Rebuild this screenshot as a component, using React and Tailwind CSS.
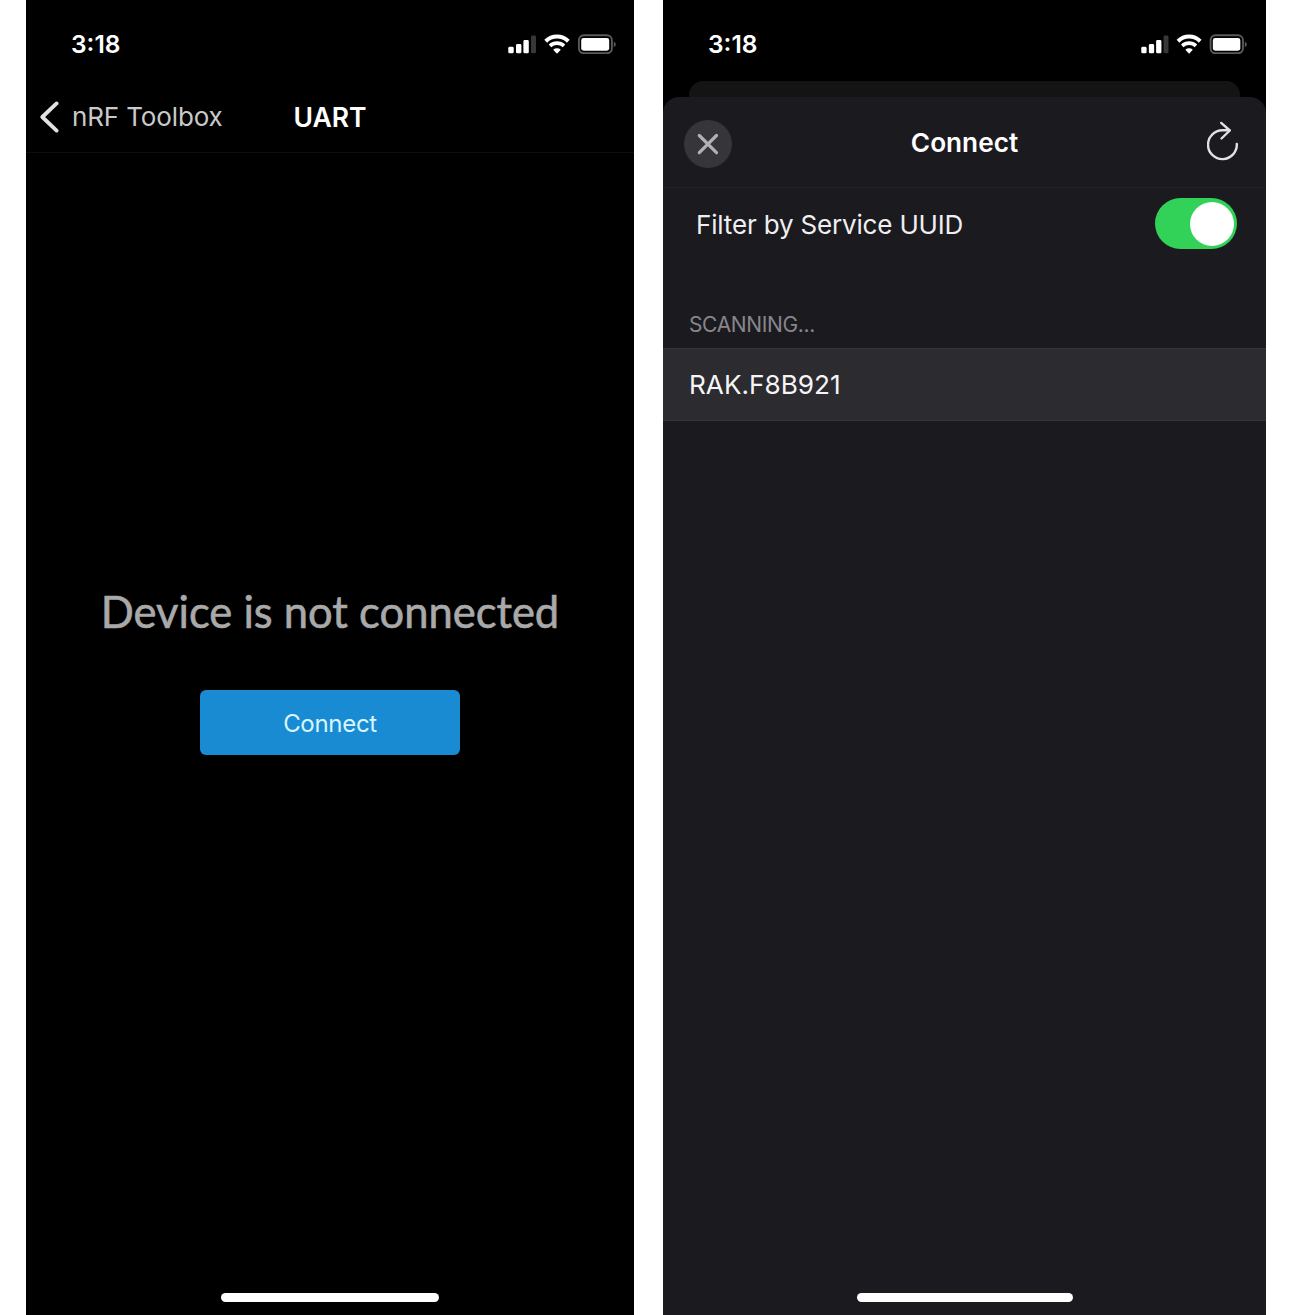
function StatusIcons({ className }) {
  return (
    <svg className={className} viewBox="508 34 108 20" preserveAspectRatio="none" fill="none">
      <rect x="508.3" y="46.8" width="5.4" height="6.5" rx="1.4" fill="#fff" />
      <rect x="516" y="44" width="5.4" height="9.3" rx="1.4" fill="#fff" />
      <rect x="523.4" y="40" width="5.4" height="13.3" rx="1.4" fill="#fff" />
      <rect x="531" y="35.5" width="5" height="17.8" rx="1.4" fill="#373737" />
      <path d="M545.7 41.2a16.2 16.2 0 0 1 22.6 0" stroke="#fff" strokeWidth="4" />
      <path d="M550 45.9a10.2 10.2 0 0 1 14 0" stroke="#fff" strokeWidth="3.6" />
      <path d="M553.2 49.7a5.6 5.6 0 0 1 7.6 0L557 53.8z" fill="#fff" />
      <rect x="578.9" y="35.3" width="33" height="18" rx="5" stroke="#5a5a5a" strokeWidth="1.9" />
      <rect x="581.2" y="38" width="28" height="12.7" rx="2.4" fill="#fff" />
      <path d="M613.8 41.8q2 .8 2 2.7t-2 2.7z" fill="#5a5a5a" />
    </svg>
  );
}

function LeftPhone() {
  return (
    <section className="flex h-full w-[608px] flex-col bg-black">
      <div className="flex h-[88px] items-center justify-between pr-[18px] pl-[45px]">
        <span className="pt-px text-[24.5px] leading-none font-semibold text-white">3:18</span>
        <StatusIcons className="h-5 w-[108px]" />
      </div>
      <header className="grid h-[65px] grid-cols-3 items-center border-b border-[#0e0e0e] pb-[6px]">
        <div className="flex items-center pl-[14px] whitespace-nowrap">
          <svg className="h-8 w-5" viewBox="0 0 20 32" fill="none" stroke="#e2e2e2" strokeWidth="3.8" strokeLinecap="round" strokeLinejoin="round">
            <path d="M16.6 2.4 2.3 16l14.3 13.6" />
          </svg>
          <span className="ml-[12px] text-[26px] leading-none tracking-[-0.13px] text-[#c9c9c9]">nRF Toolbox</span>
        </div>
        <h1 className="text-center text-[26.5px] leading-none font-semibold text-white">UART</h1>
      </header>
      <main className="flex flex-1 flex-col items-center pt-[432px]">
        <p className="font-[Lato] text-[43.5px] leading-[52px] whitespace-nowrap text-[#a9a9a9] [-webkit-text-stroke:0.6px_#a9a9a9]">Device is not connected</p>
        <button className="mt-[53px] h-[65px] w-[260px] rounded-md bg-[#198bd3] pt-[2px] text-[24px] tracking-[-0.3px] text-[#d9f5ff]">Connect</button>
      </main>
      <div className="mb-[13px] h-[9px] w-[218px] self-center rounded-full bg-white" />
    </section>
  );
}

function RightPhone() {
  return (
    <section className="flex h-full w-[603px] flex-col bg-black">
      <div className="flex h-[81px] items-center justify-between pt-[7px] pr-[19px] pl-[45px]">
        <span className="pt-px text-[24.5px] leading-none font-semibold text-white">3:18</span>
        <StatusIcons className="h-5 w-[106px]" />
      </div>
      <div className="mx-[26px] h-4 rounded-t-[14px] bg-[#141415]" />
      <div className="flex flex-1 flex-col rounded-t-[16px] bg-[#1b1a1f]">
        <header className="grid h-[91px] grid-cols-3 items-center border-b border-[#222226] pt-[3px] pr-[27px] pl-[21px]">
          <button className="flex size-12 items-center justify-center rounded-full bg-[#36353a]">
            <svg className="size-6" viewBox="0 0 24 24" stroke="#b0b0b5" strokeWidth="3.2" strokeLinecap="round">
              <path d="m3.3 3.5 17.2 17.2M20.5 3.5 3.3 20.7" />
            </svg>
          </button>
          <h2 className="pl-[6px] text-center text-[26.2px] leading-none font-semibold text-white">Connect</h2>
          <svg className="mb-[5px] h-10 w-8 justify-self-end" viewBox="1207 121 32 40" fill="none" stroke="#e1e1e4" strokeWidth="2.4" strokeLinecap="round" strokeLinejoin="round">
            <path d="M1236.8 143.9a14.4 14.4 0 1 1-14.4-13.6h7" />
            <path d="m1221.2 122.9 8.6 7.6-8.3 8" />
          </svg>
        </header>
        <div className="flex h-[71px] items-center justify-between pr-[29px] pl-[33px]">
          <span className="pt-[3px] text-[26px] leading-none tracking-[-0.17px] text-[#efeff1]">Filter by Service UUID</span>
          <div className="flex h-[51px] w-[82px] items-center justify-end rounded-full bg-[#32d158] pr-[3px]">
            <div className="size-[44px] rounded-full bg-white" />
          </div>
        </div>
        <p className="mt-[55px] flex h-[34px] items-start pl-[26px] text-[21px] leading-[22px] tracking-[-0.35px] text-[#87868b]">SCANNING...</p>
        <div className="flex h-[73px] items-center border-y border-[#35343a] bg-[#2c2b30] pt-[2px] pl-[26px] text-[26.2px] leading-none text-[#f5f5f7]">RAK.F8B921</div>
        <div className="mt-auto mb-[13px] h-[9px] w-[216px] self-center rounded-full bg-white" />
      </div>
    </section>
  );
}

export default function App() {
  return (
    <div className="flex h-[1315px] w-[1300px] gap-[29px] overflow-hidden bg-white pl-[26px] font-[Inter,sans-serif]">
      <LeftPhone />
      <RightPhone />
    </div>
  );
}
